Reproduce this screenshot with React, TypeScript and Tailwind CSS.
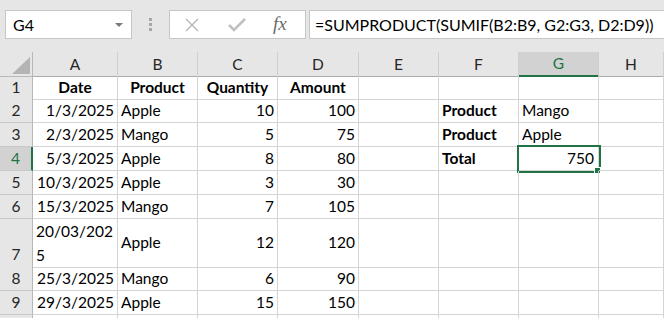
import React from "react";

const FONT = { fontFamily: "Lato, 'Open Sans', sans-serif" };

type Cell = { v?: string; align?: "l" | "r" | "c"; bold?: boolean };

const rows: { n: number; h: string; cells: Cell[] }[] = [
  {
    n: 1,
    h: "h-[23px]",
    cells: [
      { v: "Date", align: "c", bold: true },
      { v: "Product", align: "c", bold: true },
      { v: "Quantity", align: "c", bold: true },
      { v: "Amount", align: "c", bold: true },
      {}, {}, {}, {},
    ],
  },
  {
    n: 2,
    h: "h-[24px]",
    cells: [
      { v: "1/3/2025", align: "r" }, { v: "Apple" }, { v: "10", align: "r" }, { v: "100", align: "r" },
      {}, { v: "Product", bold: true }, { v: "Mango" }, {},
    ],
  },
  {
    n: 3,
    h: "h-[24px]",
    cells: [
      { v: "2/3/2025", align: "r" }, { v: "Mango" }, { v: "5", align: "r" }, { v: "75", align: "r" },
      {}, { v: "Product", bold: true }, { v: "Apple" }, {},
    ],
  },
  {
    n: 4,
    h: "h-[24px]",
    cells: [
      { v: "5/3/2025", align: "r" }, { v: "Apple" }, { v: "8", align: "r" }, { v: "80", align: "r" },
      {}, { v: "Total", bold: true }, { v: "750", align: "r" }, {},
    ],
  },
  {
    n: 5,
    h: "h-[24px]",
    cells: [
      { v: "10/3/2025", align: "r" }, { v: "Apple" }, { v: "3", align: "r" }, { v: "30", align: "r" },
      {}, {}, {}, {},
    ],
  },
  {
    n: 6,
    h: "h-[24px]",
    cells: [
      { v: "15/3/2025", align: "r" }, { v: "Mango" }, { v: "7", align: "r" }, { v: "105", align: "r" },
      {}, {}, {}, {},
    ],
  },
  {
    n: 7,
    h: "h-[48px]",
    cells: [
      { v: "20/03/2025" }, { v: "Apple" }, { v: "12", align: "r" }, { v: "120", align: "r" },
      {}, {}, {}, {},
    ],
  },
  {
    n: 8,
    h: "h-[24px]",
    cells: [
      { v: "25/3/2025", align: "r" }, { v: "Mango" }, { v: "6", align: "r" }, { v: "90", align: "r" },
      {}, {}, {}, {},
    ],
  },
  {
    n: 9,
    h: "h-[24px]",
    cells: [
      { v: "29/3/2025", align: "r" }, { v: "Apple" }, { v: "15", align: "r" }, { v: "150", align: "r" },
      {}, {}, {}, {},
    ],
  },
];

const cols = ["A", "B", "C", "D", "E", "F", "G", "H"];
const grid = "grid grid-cols-[33px_85px_80px_80px_81px_80px_80px_80px_1fr]";

export default function App() {
  return (
    <div className="h-[318px] w-[664px] overflow-hidden bg-white text-[15.5px] text-black" style={FONT}>
      {/* formula bar */}
      <div className="flex h-[52px] items-start bg-[#e6e6e6] pt-[10px]">
        <div className="ml-[5px] flex h-[29px] w-[127px] items-center justify-between border border-[#c6c6c6] bg-white pl-[7px] pr-[8px]">
          <span className="text-[16px]">G4</span>
          <span className="h-0 w-0 border-x-[4px] border-t-[4px] border-x-transparent border-t-[#7a7a7a]" />
        </div>
        <div className="flex w-[37px] flex-col items-center gap-[2px] pt-[8px]">
          <span className="h-[3px] w-[3px] bg-[#a6a6a6]" />
          <span className="h-[3px] w-[3px] bg-[#a6a6a6]" />
          <span className="h-[3px] w-[3px] bg-[#a6a6a6]" />
        </div>
        <div className="flex h-[29px] w-[137px] items-center border border-[#c6c6c6] bg-white">
          <svg className="ml-[14px]" width="16" height="14" viewBox="0 0 16 14">
            <path d="M2 1 L14 13 M14 1 L2 13" stroke="#b4b4b4" strokeWidth="1.3" fill="none" />
          </svg>
          <svg className="ml-[28px]" width="18" height="14" viewBox="0 0 18 14">
            <path d="M1 7 L6 12 L17 1" stroke="#c0c0c0" strokeWidth="2.6" fill="none" />
          </svg>
          <span
            className="ml-[27px] text-[19px] italic text-[#6b6b6b]"
            style={{ fontFamily: "'Liberation Serif', serif" }}
          >
            fx
          </span>
        </div>
        <div className="ml-[3px] flex h-[29px] flex-1 items-center border-y border-l border-[#c6c6c6] bg-white pl-[5px] text-[16px]">
          =SUMPRODUCT(SUMIF(B2:B9, G2:G3, D2:D9))
        </div>
      </div>

      {/* column headers */}
      <div className={`${grid} h-[24px] bg-[#e6e6e6]`}>
        <div className="relative border-b border-r border-[#b8b8b8]">
          <span className="absolute bottom-[2px] right-[2px] h-0 w-0 border-b-[17px] border-l-[18px] border-b-[#b4b4b4] border-l-transparent" />
        </div>
        {cols.map((c) => (
          <div
            key={c}
            className={`flex items-center justify-center border-r border-[#cfcfcf] ${
              c === "G"
                ? "border-b-2 border-b-[#217346] bg-[#d2d2d2] text-[#217346]"
                : "border-b border-b-[#ababab] text-[#262626]"
            }`}
          >
            {c}
          </div>
        ))}
      </div>

      {/* rows */}
      {rows.map((r) => (
        <div key={r.n} className={`${grid} ${r.h}`}>
          <div
            className={`flex justify-center border-b border-[#c8c8c8] ${
              r.n === 7 ? "items-end pb-[1px]" : "items-center"
            } ${
              r.n === 4
                ? "border-r-2 border-r-[#217346] bg-[#d2d2d2] text-[#217346]"
                : "border-r border-r-[#b8b8b8] bg-[#e6e6e6] text-[#262626]"
            }`}
          >
            {r.n}
          </div>
          {r.cells.map((c, i) => {
            const selected = r.n === 4 && i === 6;
            const wrap = r.n === 7 && i === 0;
            return (
              <div
                key={i}
                className={`relative flex items-center border-b border-r border-[#d4d4d4] px-[3px] ${
                  c.align === "r" ? "justify-end" : c.align === "c" ? "justify-center" : "justify-start"
                } ${c.bold ? "font-bold" : ""} ${selected ? "pr-[4px]" : ""}`}
              >
                {wrap ? (
                  <div className="flex flex-col leading-[24px]">
                    <span>20/03/202</span>
                    <span>5</span>
                  </div>
                ) : (
                  <span className="whitespace-nowrap">{c.v}</span>
                )}
                {selected && (
                  <>
                    <div className="pointer-events-none absolute -left-[2px] -top-[2px] h-[28px] w-[84px] border-2 border-[#217346]" />
                    <div className="absolute -bottom-[4px] -right-[3px] h-[7px] w-[7px] border border-white bg-[#217346]" />
                  </>
                )}
              </div>
            );
          })}
        </div>
      ))}

      {/* partly visible row 10 */}
      <div className={`${grid} h-[24px]`}>
        <div className="border-r border-[#b8b8b8] bg-[#e6e6e6]" />
        {cols.map((c) => (
          <div key={c} className="border-r border-[#d4d4d4]" />
        ))}
      </div>
    </div>
  );
}
